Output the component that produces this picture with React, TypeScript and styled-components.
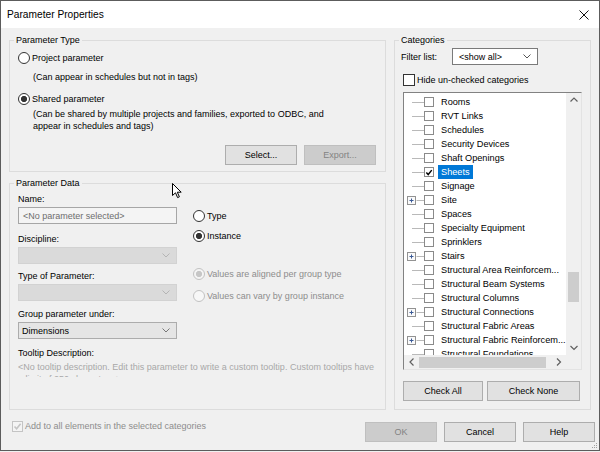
import React from "react";
import styled, { createGlobalStyle, css } from "styled-components";

const Global = createGlobalStyle`
  html, body { margin: 0; padding: 0; background: #f0f0f0; }
  body { font-family: "Liberation Sans", Arial, sans-serif; font-size: 9px; color: #000; }
  * { box-sizing: border-box; }
`;

const Window = styled.div`
  position: relative;
  width: 600px;
  height: 451px;
  border: 1px solid #5c5c5c;
  background: #f0f0f0;
  display: flex;
  flex-direction: column;
  overflow: hidden;
`;

const TitleBar = styled.div`
  flex: none;
  height: 27px;
  background: #fff;
  display: flex;
  align-items: center;
  justify-content: space-between;
  padding: 0 10px 0 6px;
`;

const TitleText = styled.span`
  font-size: 10.2px;
  color: #000;
`;

const Body = styled.div`
  flex: none;
  height: 382px;
  display: flex;
  gap: 8px;
  padding: 6px 8px 0 8px;
`;

const Column = styled.div<{ $width: number }>`
  width: ${(p) => p.$width}px;
  display: flex;
  flex-direction: column;
  gap: 5px;
`;

const Group = styled.fieldset<{ $grow?: boolean }>`
  margin: 0;
  padding: 0;
  min-width: 0;
  border: 1px solid #dcdcdc;
  ${(p) => p.$grow && css`flex: 1;`}
`;

const Legend = styled.legend`
  padding: 0 2px;
  margin-left: 4px;
  line-height: 12px;
  font-size: 9px;
`;

const GroupContent = styled.div<{ $pad: string }>`
  display: flex;
  flex-direction: column;
  padding: ${(p) => p.$pad};
`;

const RadioRow = styled.div<{ $mt?: number; $disabled?: boolean }>`
  display: flex;
  align-items: center;
  gap: 2px;
  height: 12px;
  margin-top: ${(p) => p.$mt ?? 0}px;
  color: ${(p) => (p.$disabled ? "#8d8d8d" : "#000")};
`;

const RadioCircle = styled.span<{ $checked?: boolean; $disabled?: boolean }>`
  flex: none;
  width: 12px;
  height: 12px;
  border-radius: 50%;
  border: 1px solid ${(p) => (p.$disabled ? "#c2c2c2" : "#333")};
  background: ${(p) =>
    p.$checked
      ? `radial-gradient(circle, ${p.$disabled ? "#c6c6c6" : "#333"} 0 2.8px, ${p.$disabled ? "#f4f4f4" : "#fff"} 3.3px)`
      : p.$disabled
      ? "#f7f7f7"
      : "#fff"};
`;

const Description = styled.div<{ $mt?: number }>`
  margin-left: 15px;
  margin-top: ${(p) => p.$mt ?? 0}px;
  line-height: 12px;
`;

const ButtonRow = styled.div<{ $mt?: number; $justify?: string; $gap: number }>`
  display: flex;
  justify-content: ${(p) => p.$justify ?? "flex-end"};
  gap: ${(p) => p.$gap}px;
  margin-top: ${(p) => p.$mt ?? 0}px;
`;

const Button = styled.button<{ $width: number }>`
  width: ${(p) => p.$width}px;
  height: 20px;
  padding: 0;
  font: inherit;
  font-size: 9px;
  color: #000;
  background: #e1e1e1;
  border: 1px solid #adadad;
  &:disabled {
    background: #cccccc;
    border-color: #bfbfbf;
    color: #838383;
  }
`;

const DataGrid = styled.div`
  display: grid;
  grid-template-columns: 159px 1fr;
  column-gap: 16px;
`;

const Stack = styled.div`
  display: flex;
  flex-direction: column;
`;

const FieldLabel = styled.div<{ $mt?: number }>`
  line-height: 12px;
  margin-top: ${(p) => p.$mt ?? 0}px;
`;

const TextBox = styled.div`
  margin-top: 2px;
  height: 17px;
  border: 1px solid #a6a6a6;
  background: #f4f4f4;
  color: #6d6d6d;
  display: flex;
  align-items: center;
  padding-left: 4px;
`;

type DropVariant = "disabled" | "enabled" | "white";

const Drop = styled.div<{ $variant: DropVariant; $width?: number; $mt?: number }>`
  margin-top: ${(p) => p.$mt ?? 0}px;
  width: ${(p) => (p.$width ? `${p.$width}px` : "auto")};
  height: 17px;
  display: flex;
  align-items: center;
  justify-content: space-between;
  padding: 0 6px 0 3px;
  ${(p) =>
    p.$variant === "disabled"
      ? css`background: #dadada; border: 1px solid #d2d2d2; color: #888;`
      : p.$variant === "enabled"
      ? css`background: #e5e5e5; border: 1px solid #acacac; color: #000;`
      : css`background: #fff; border: 1px solid #7a7a7a; color: #000; padding-left: 6px;`}
`;

const TooltipText = styled.div`
  margin-top: 2px;
  height: 16px;
  overflow: hidden;
  line-height: 12.3px;
  color: #a8a8a8;
  white-space: normal;
`;

const FilterRow = styled.div`
  display: flex;
  align-items: center;
  margin-left: -2px;
`;

const FilterLabel = styled.span`
  width: 51px;
`;

const CheckRow = styled.div<{ $mt?: number; $disabled?: boolean }>`
  display: flex;
  align-items: center;
  gap: 2px;
  height: 12px;
  margin-top: ${(p) => p.$mt ?? 0}px;
  color: ${(p) => (p.$disabled ? "#8d8d8d" : "#000")};
`;

const CheckBox = styled.span<{ $size: number; $color: string; $bg?: string }>`
  flex: none;
  width: ${(p) => p.$size}px;
  height: ${(p) => p.$size}px;
  border: 1px solid ${(p) => p.$color};
  background: ${(p) => p.$bg ?? "#fff"};
  display: flex;
  align-items: center;
  justify-content: center;
`;

const TreeBox = styled.div`
  margin-top: 6px;
  width: 179px;
  height: 278px;
  border-style: solid;
  border-width: 1px;
  border-color: #828282 #e3e3e3 #e3e3e3 #828282;
  background: #fff;
  display: grid;
  grid-template-columns: 1fr 15px;
  grid-template-rows: 1fr 14px;
`;

const TreeRows = styled.div`
  overflow: hidden;
  padding-top: 2px;
`;

const TreeRow = styled.div`
  display: flex;
  align-items: center;
  height: 14px;
  font-size: 9.2px;
  white-space: nowrap;
`;

const TreeLabel = styled.span<{ $selected?: boolean }>`
  margin-left: 4px;
  padding: 0 3px;
  line-height: 14px;
  height: 14px;
  background: ${(p) => (p.$selected ? "#0078d7" : "transparent")};
  color: ${(p) => (p.$selected ? "#fff" : "#000")};
`;

const VScroll = styled.div`
  background: #f0f0f0;
  display: flex;
  flex-direction: column;
`;

const HScroll = styled.div`
  background: #f0f0f0;
  display: flex;
  align-items: center;
`;

const Corner = styled.div`
  background: #f0f0f0;
`;

const ScrollBtn = styled.div`
  flex: none;
  width: 15px;
  height: 14px;
  display: flex;
  align-items: center;
  justify-content: center;
`;

const VTrack = styled.div`
  flex: 1;
  display: flex;
  flex-direction: column;
  align-items: center;
`;

const HTrack = styled.div`
  flex: 1;
  display: flex;
  align-items: center;
  height: 14px;
`;

const Thumb = styled.div<{ $w: number; $h: number; $offset: number; $vertical?: boolean }>`
  width: ${(p) => p.$w}px;
  height: ${(p) => p.$h}px;
  background: #cdcdcd;
  ${(p) => (p.$vertical ? css`margin-top: ${p.$offset}px;` : css`margin-left: ${p.$offset}px;`)}
`;

const Footer = styled.div`
  flex: 1;
  display: flex;
  align-items: flex-start;
  padding: 10px 4px 0 11px;
`;

const FooterButtons = styled.div`
  margin-left: auto;
  margin-top: 2px;
  display: flex;
  gap: 7px;
`;

const Overlay = styled.svg<{ $left?: number; $top?: number; $right?: number; $bottom?: number }>`
  position: absolute;
  ${(p) => (p.$left !== undefined ? `left: ${p.$left}px;` : "")}
  ${(p) => (p.$top !== undefined ? `top: ${p.$top}px;` : "")}
  ${(p) => (p.$right !== undefined ? `right: ${p.$right}px;` : "")}
  ${(p) => (p.$bottom !== undefined ? `bottom: ${p.$bottom}px;` : "")}
`;

const Chevron = ({ color = "#777" }: { color?: string }) => (
  <svg width="8" height="5" viewBox="0 0 8 5">
    <path d="M0.5 0.5 L4 4 L7.5 0.5" fill="none" stroke={color} strokeWidth="1" />
  </svg>
);

const Arrow = ({ dir }: { dir: "up" | "down" | "left" | "right" }) => {
  const d =
    dir === "up"
      ? "M0.5 4.5 L4 1 L7.5 4.5"
      : dir === "down"
      ? "M0.5 1 L4 4.5 L7.5 1"
      : dir === "left"
      ? "M4.5 0.5 L1 4 L4.5 7.5"
      : "M1 0.5 L4.5 4 L1 7.5";
  const vertical = dir === "up" || dir === "down";
  return (
    <svg width={vertical ? 8 : 6} height={vertical ? 6 : 8} viewBox={vertical ? "0 0 8 6" : "0 0 6 8"}>
      <path d={d} fill="none" stroke="#606060" strokeWidth="1.2" />
    </svg>
  );
};

const CheckMark = ({ color }: { color: string }) => (
  <svg width="9" height="9" viewBox="0 0 9 9">
    <path d="M1.5 4.5 L3.6 6.8 L7.6 1.8" fill="none" stroke={color} strokeWidth="1.6" />
  </svg>
);

const Connector = ({ expandable }: { expandable?: boolean }) => (
  <svg width="20" height="14" viewBox="0 0 20 14" style={{ flex: "none" }}>
    <line x1={expandable ? 12.5 : 8} y1="7.5" x2="20" y2="7.5" stroke="#b9b9b9" strokeWidth="1" />
    {expandable && (
      <>
        <rect x="3.5" y="3.5" width="8" height="8" fill="#fafafa" stroke="#929292" strokeWidth="1" />
        <line x1="5.5" y1="7.5" x2="9.5" y2="7.5" stroke="#3a5a96" strokeWidth="1" />
        <line x1="7.5" y1="5.5" x2="7.5" y2="9.5" stroke="#3a5a96" strokeWidth="1" />
      </>
    )}
  </svg>
);

const Radio = ({
  label,
  checked,
  disabled,
  mt,
}: {
  label: string;
  checked?: boolean;
  disabled?: boolean;
  mt?: number;
}) => (
  <RadioRow $mt={mt} $disabled={disabled}>
    <RadioCircle $checked={checked} $disabled={disabled} />
    <span>{label}</span>
  </RadioRow>
);

type Item = { label: string; checked?: boolean; selected?: boolean; expandable?: boolean };

const items: Item[] = [
  { label: "Rooms" },
  { label: "RVT Links" },
  { label: "Schedules" },
  { label: "Security Devices" },
  { label: "Shaft Openings" },
  { label: "Sheets", checked: true, selected: true },
  { label: "Signage" },
  { label: "Site", expandable: true },
  { label: "Spaces" },
  { label: "Specialty Equipment" },
  { label: "Sprinklers" },
  { label: "Stairs", expandable: true },
  { label: "Structural Area Reinforcem..." },
  { label: "Structural Beam Systems" },
  { label: "Structural Columns" },
  { label: "Structural Connections", expandable: true },
  { label: "Structural Fabric Areas" },
  { label: "Structural Fabric Reinforcem...", expandable: true },
  { label: "Structural Foundations" },
];

export default function App() {
  return (
    <>
      <Global />
      <Window>
        <TitleBar>
          <TitleText>Parameter Properties</TitleText>
          <svg width="10" height="10" viewBox="0 0 10 10">
            <path d="M0.5 0.5 L9.5 9.5 M9.5 0.5 L0.5 9.5" stroke="#111" strokeWidth="1" />
          </svg>
        </TitleBar>
        <Body>
          <Column $width={377}>
            <Group>
              <Legend>Parameter Type</Legend>
              <GroupContent $pad="6px 9px 6px 8px">
                <Radio label="Project parameter" />
                <Description $mt={7}>(Can appear in schedules but not in tags)</Description>
                <Radio label="Shared parameter" checked mt={10} />
                <Description $mt={3}>
                  (Can be shared by multiple projects and families, exported to ODBC, and
                  <br />
                  appear in schedules and tags)
                </Description>
                <ButtonRow $mt={13} $gap={7}>
                  <Button $width={72}>Select...</Button>
                  <Button $width={72} disabled>
                    Export...
                  </Button>
                </ButtonRow>
              </GroupContent>
            </Group>
            <Group $grow>
              <Legend>Parameter Data</Legend>
              <GroupContent $pad="4px 8px 0 8px">
                <DataGrid>
                  <Stack>
                    <FieldLabel>Name:</FieldLabel>
                    <TextBox>&lt;No parameter selected&gt;</TextBox>
                    <FieldLabel $mt={9}>Discipline:</FieldLabel>
                    <Drop $variant="disabled" $mt={2}>
                      <span />
                      <Chevron color="#b4b4b4" />
                    </Drop>
                    <FieldLabel $mt={6}>Type of Parameter:</FieldLabel>
                    <Drop $variant="disabled" $mt={2}>
                      <span />
                      <Chevron color="#b4b4b4" />
                    </Drop>
                    <FieldLabel $mt={7}>Group parameter under:</FieldLabel>
                    <Drop $variant="enabled" $mt={2}>
                      <span>Dimensions</span>
                      <Chevron color="#777" />
                    </Drop>
                  </Stack>
                  <Stack>
                    <Radio label="Type" mt={17} />
                    <Radio label="Instance" checked mt={8} />
                    <Radio label="Values are aligned per group type" checked disabled mt={26} />
                    <Radio label="Values can vary by group instance" disabled mt={10} />
                  </Stack>
                </DataGrid>
                <FieldLabel $mt={8}>Tooltip Description:</FieldLabel>
                <TooltipText>
                  &lt;No tooltip description. Edit this parameter to write a custom tooltip. Custom tooltips have a limit of 250 characters.&gt;
                </TooltipText>
              </GroupContent>
            </Group>
          </Column>
          <Column $width={197}>
            <Group $grow>
              <Legend>Categories</Legend>
              <GroupContent $pad="2px 8px 0 8px">
                <FilterRow>
                  <FilterLabel>Filter list:</FilterLabel>
                  <Drop $variant="white" $width={86}>
                    <span>&lt;show all&gt;</span>
                    <Chevron color="#555" />
                  </Drop>
                </FilterRow>
                <CheckRow $mt={9}>
                  <CheckBox $size={12} $color="#333" />
                  <span>Hide un-checked categories</span>
                </CheckRow>
                <TreeBox>
                  <TreeRows>
                    {items.map((it) => (
                      <TreeRow key={it.label}>
                        <Connector expandable={it.expandable} />
                        <CheckBox $size={10} $color="#8a8a8a">
                          {it.checked && <CheckMark color="#000" />}
                        </CheckBox>
                        <TreeLabel $selected={it.selected}>{it.label}</TreeLabel>
                      </TreeRow>
                    ))}
                  </TreeRows>
                  <VScroll>
                    <ScrollBtn>
                      <Arrow dir="up" />
                    </ScrollBtn>
                    <VTrack>
                      <Thumb $vertical $w={11} $h={30} $offset={165} />
                    </VTrack>
                    <ScrollBtn>
                      <Arrow dir="down" />
                    </ScrollBtn>
                  </VScroll>
                  <HScroll>
                    <ScrollBtn>
                      <Arrow dir="left" />
                    </ScrollBtn>
                    <HTrack>
                      <Thumb $w={127} $h={11} $offset={0} />
                    </HTrack>
                    <ScrollBtn>
                      <Arrow dir="right" />
                    </ScrollBtn>
                  </HScroll>
                  <Corner />
                </TreeBox>
                <ButtonRow $mt={11} $gap={4} $justify="flex-start">
                  <Button $width={80}>Check All</Button>
                  <Button $width={93}>Check None</Button>
                </ButtonRow>
              </GroupContent>
            </Group>
          </Column>
        </Body>
        <Footer>
          <CheckRow $disabled>
            <CheckBox $size={11} $color="#c4c4c4" $bg="#f4f4f4">
              <CheckMark color="#c4c4c4" />
            </CheckBox>
            <span>Add to all elements in the selected categories</span>
          </CheckRow>
          <FooterButtons>
            <Button $width={72} disabled>
              OK
            </Button>
            <Button $width={72}>Cancel</Button>
            <Button $width={72}>Help</Button>
          </FooterButtons>
        </Footer>
        <Overlay $left={171} $top={182} width="11" height="16" viewBox="0 0 11 16">
          <path
            d="M0.5 0.5 L0.5 12.5 L3.5 9.8 L5.6 14.6 L7.4 13.8 L5.3 9.2 L9.2 9.2 Z"
            fill="#fff"
            stroke="#000"
            strokeWidth="1"
            strokeLinejoin="round"
          />
        </Overlay>
        <Overlay $right={1} $bottom={1} width="7" height="7" viewBox="0 0 7 7">
          <rect x="5" y="1" width="1" height="1" fill="#a0a0a0" />
          <rect x="3" y="3" width="1" height="1" fill="#a0a0a0" />
          <rect x="5" y="3" width="1" height="1" fill="#a0a0a0" />
          <rect x="1" y="5" width="1" height="1" fill="#a0a0a0" />
          <rect x="3" y="5" width="1" height="1" fill="#a0a0a0" />
          <rect x="5" y="5" width="1" height="1" fill="#a0a0a0" />
        </Overlay>
      </Window>
    </>
  );
}
